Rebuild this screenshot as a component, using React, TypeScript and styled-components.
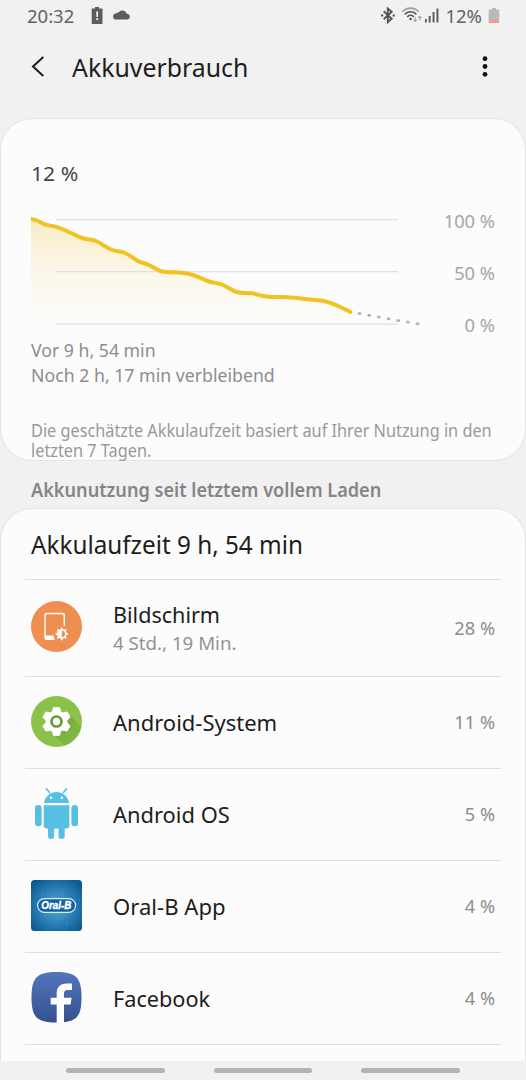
import React from "react";
import styled, { createGlobalStyle } from "styled-components";

const GlobalStyle = createGlobalStyle`
  html, body, #root { margin: 0; height: 100%; }
  body { background: #f1f1f1; overflow: hidden; }
  *, *::before, *::after { box-sizing: border-box; }
  svg { display: block; flex: none; }
`;

const Screen = styled.div`
  width: 526px;
  height: 1080px;
  display: flex;
  flex-direction: column;
  overflow: hidden;
  background: #f1f1f1;
  color: #1d1d1d;
  font-family: "Noto Sans", "Open Sans", sans-serif;
`;

const Label = styled.span<{
  $size: number;
  $line: number;
  $color?: string;
  $weight?: number;
  $stretch?: number;
  $right?: boolean;
}>`
  display: block;
  white-space: nowrap;
  font-size: ${(p) => p.$size}px;
  line-height: ${(p) => p.$line}px;
  color: ${(p) => p.$color ?? "#1d1d1d"};
  font-weight: ${(p) => p.$weight ?? 400};
  transform: scaleX(${(p) => p.$stretch ?? 1});
  transform-origin: ${(p) => (p.$right ? "right" : "left")} center;
`;

const StatusBar = styled.div`
  height: 32px;
  flex: none;
  display: flex;
  justify-content: space-between;
  padding: 0 26px 0 27px;
`;

const StatusGroup = styled.div`
  display: flex;
  align-items: flex-start;
`;

const Notifications = styled.div`
  display: flex;
  gap: 9px;
  margin-left: 17px;
`;

const Connectivity = styled.div`
  display: flex;
  margin-right: 5px;

  svg:first-child { margin-right: 6px; }
  svg:last-child { margin-left: 1px; }
`;

const BatteryGroup = styled.div`
  display: flex;
  gap: 6px;
`;

const Header = styled.header`
  height: 86px;
  flex: none;
  display: flex;
  align-items: flex-start;
  padding: 15px 31px 0 28px;
`;

const Title = styled.h1`
  margin: 0 auto 0 24px;
`;

const Card = styled.section<{ $open?: boolean }>`
  flex: none;
  background: #fcfcfc;
  border: 1px solid #e4e4e4;
  border-bottom-width: ${(p) => (p.$open ? 0 : 1)}px;
  border-radius: ${(p) => (p.$open ? "32px 32px 0 0" : "32px")};
`;

const UsageCard = styled(Card)`
  height: 343px;
  padding: 39px 30px 0;
`;

const ChartRow = styled.div`
  display: flex;
  justify-content: space-between;
  height: 125px;
  margin-top: 24px;
`;

const Scale = styled.div`
  display: flex;
  flex-direction: column;
  align-items: flex-end;
  gap: 26px;
  margin-top: -4px;
`;

const Note = styled.div`
  margin-top: 34px;
`;

const SectionTitle = styled.h2`
  margin: 0;
  height: 47px;
  flex: none;
  padding: 15px 31px 0;
`;

const ListCard = styled(Card)`
  height: 553px;
  padding: 0 24px;
  overflow: hidden;
`;

const ListHead = styled.div`
  height: 70px;
  padding: 19px 6px 0;
`;

const Row = styled.div<{ $height: number; $double?: boolean }>`
  display: flex;
  align-items: center;
  height: ${(p) => p.$height}px;
  padding: 0 6px ${(p) => (p.$double ? 0 : 2)}px 6px;
  border-top: 1px solid #dedede;

  > svg { margin-bottom: ${(p) => (p.$double ? 4 : 0)}px; }
`;

const RowText = styled.div`
  flex: 1;
  margin-left: 31px;
`;

const NavBar = styled.nav`
  flex: 1;
  display: flex;
  justify-content: center;
  gap: 49px;
  padding-top: 7px;
`;

const NavPill = styled.span`
  width: 98.5px;
  height: 5px;
  border-radius: 2.5px;
  background: #b3b3b3;
`;

const points: [number, number][] = [
  [0, 7], [6, 8.5], [15, 12.7], [27, 15.3], [39, 20.5], [51, 26], [65, 29],
  [80, 37.5], [94, 41], [107, 49], [118, 53], [131, 59.5], [149, 60.5],
  [162, 63], [178, 69.5], [191, 72.5], [206, 80], [221, 81.3], [232, 84],
  [241, 85], [257, 85.2], [279, 87.5], [294, 89.3], [307, 94], [319.5, 100],
];

const smooth = (p: [number, number][]) => {
  let d = `M${p[0][0]} ${p[0][1]}`;
  for (let i = 0; i < p.length - 1; i++) {
    const a = p[i - 1] ?? p[i];
    const b = p[i];
    const c = p[i + 1];
    const e = p[i + 2] ?? c;
    d += `C${b[0] + (c[0] - a[0]) / 6} ${b[1] + (c[1] - a[1]) / 6} ${c[0] - (e[0] - b[0]) / 6} ${c[1] - (e[1] - b[1]) / 6} ${c[0]} ${c[1]}`;
  }
  return d;
};

const Chart = () => {
  const line = smooth(points);
  return (
    <svg width="392" height="120" viewBox="0 0 392 120">
      <defs>
        <linearGradient id="fade" x1="0" y1="7" x2="0" y2="112" gradientUnits="userSpaceOnUse">
          <stop offset="0" stopColor="#f9ebc2" />
          <stop offset="1" stopColor="#fcf8ea" stopOpacity="0.1" />
        </linearGradient>
        <clipPath id="plot">
          <rect x="0" y="0" width="392" height="120" />
        </clipPath>
      </defs>
      <path d={`${line}V112H0Z`} fill="url(#fade)" />
      <path d="M25 7.6H367M25 59.6H367M25 112.1H367" stroke="#dcdcdc" strokeOpacity="0.85" strokeWidth="1.3" />
      <path d={line} clipPath="url(#plot)" fill="none" stroke="#f0c320" strokeWidth="4" strokeLinecap="round" strokeLinejoin="round" />
      {Array.from({ length: 7 }, (_, i) => (
        <ellipse key={i} cx={328.5 + i * 9.67} cy={101.5 + i * 1.72} rx="2" ry="1.5" fill="#b1b7b9" />
      ))}
    </svg>
  );
};

const LowBattery = () => (
  <svg width="13" height="26" viewBox="0 0 13 26">
    <path d="M4 7h4v1.5h3.5V24H.7V8.500H4Z" fill="#5d5d5d" />
    <path d="M5.200 11.500h1.900l-.2 5.500H5.400ZM5.200 18.300h1.900V20H5.200Z" fill="#f1f1f1" />
  </svg>
);

const Cloud = () => (
  <svg width="18" height="26" viewBox="0 0 18 26">
    <path d="M3.300 19.600a3 3 0 0 1-.3-6 2.600 2.600 0 0 1 2.500-1.200A4.700 4.700 0 0 1 13.700 13.800a2.900 2.900 0 1 1 .3 5.800Z" fill="#5d5d5d" />
  </svg>
);

const Bluetooth = () => (
  <svg width="16" height="26" viewBox="0 0 16 26" fill="none" stroke="#555" strokeWidth="1.900">
    <path d="m3.700 11.300 8 7.500-3.900 3.300V8.600l3.900 3.200-8 7.500" />
    <path d="M1 15.400h2.200M12.600 15.400h2.200" strokeWidth="2" />
  </svg>
);

const Wifi = () => (
  <svg width="21" height="26" viewBox="0 0 21 26" fill="none" strokeLinecap="round">
    <path d="M.9 11.300a11 11 0 0 1 15.400 0" stroke="#a2a2a2" strokeWidth="1.600" />
    <path d="M3.300 13.900a7.700 7.700 0 0 1 10.600 0M5.700 16.500a4.200 4.200 0 0 1 5.800 0" stroke="#555" strokeWidth="1.600" />
    <circle cx="8.600" cy="19" r="1.300" fill="#555" />
    <path d="M13.200 17.500v4m-1.300-1.400 1.300 1.400 1.300-1.400M17.900 20.300v-4m-1.300 1.400 1.300-1.400 1.300 1.400" stroke="#a2a2a2" strokeWidth="1.100" />
  </svg>
);

const Signal = () => (
  <svg width="16" height="26" viewBox="0 0 16 26">
    <path d="M1 19h1.800v3.500H1ZM4.700 16h1.900v6.500H4.700ZM8.600 12h1.900v10.500H8.600ZM12.500 8.500h1.900v14h-1.900Z" fill="#5a5a5a" />
  </svg>
);

const BatteryLevel = () => (
  <svg width="12" height="26" viewBox="0 0 12 26">
    <path d="M4 8h4v1.500h2.200a1 1 0 0 1 1 1V20H.7v-9.500a1 1 0 0 1 1-1H4Z" fill="#b9b9b9" />
    <path d="M.7 19.700h10.500V22a1 1 0 0 1-1 1H1.700a1 1 0 0 1-1-1Z" fill="#ee9f87" />
  </svg>
);

const ScreenIcon = () => (
  <svg width="51" height="51" viewBox="0 0 51 51">
    <circle cx="25.500" cy="25.500" r="25.500" fill="#ef8e51" />
    <path d="M23 38.200H16a2 2 0 0 1-2-2V14.400a2 2 0 0 1 2-2h15.300a2 2 0 0 1 2 2v10.500" fill="none" stroke="#fff" strokeWidth="1.500" />
    <path d="M14 34.500h8.500l1.200 4.400H15.500a2 2 0 0 1-1.500-2Z" fill="#fff" />
    <g transform="translate(30.800 32.900)">
      {Array.from({ length: 8 }, (_, i) => (
        <path key={i} d="M-1.500-4.300 0-7l1.500 2.700Z" fill="#fff" transform={`rotate(${i * 45})`} />
      ))}
      <circle r="4.700" fill="#fff" />
      <path d="M0-3.200a3.200 3.200 0 0 1 0 6.400Z" fill="#ef8e51" />
    </g>
  </svg>
);

const GearIcon = () => (
  <svg width="51" height="51" viewBox="0 0 51 51">
    <defs>
      <clipPath id="disc">
        <circle cx="25.500" cy="25.500" r="25.500" />
      </clipPath>
      <linearGradient id="shade" x1="27" y1="27" x2="43" y2="43" gradientUnits="userSpaceOnUse">
        <stop offset="0" stopColor="#74a83d" />
        <stop offset="1" stopColor="#82ba45" />
      </linearGradient>
    </defs>
    <circle cx="25.500" cy="25.500" r="25.500" fill="#8bc34a" />
    <path clipPath="url(#disc)" d="M38.500 19 60 40.500V60H44L22.500 38.500Z" fill="url(#shade)" />
    <g transform="translate(25.500 25.500)">
      {Array.from({ length: 6 }, (_, i) => (
        <path key={i} d="M-4.500-9-3-14H3L4.500-9Z" fill="#fff" stroke="#fff" strokeWidth=".8" strokeLinejoin="round" transform={`rotate(${i * 60})`} />
      ))}
      <circle r="10.800" fill="#fff" />
      <circle r="5" fill="none" stroke="#679b39" strokeWidth="2.700" />
    </g>
  </svg>
);

const AndroidIcon = () => (
  <svg width="51" height="51" viewBox="0 0 51 51" fill="#56bfe4">
    <path d="M13 15a12.600 12.600 0 0 1 25 0Z" />
    <path d="m18.500 4.500-3-3.800M32.500 4.500l3-3.800" stroke="#56bfe4" strokeWidth="1.600" strokeLinecap="round" />
    <circle cx="20" cy="9.700" r="1.200" fill="#fff" />
    <circle cx="30.800" cy="9.700" r="1.200" fill="#fff" />
    <path d="M12.800 17.300h25.500v20.200a3 3 0 0 1-3 3H15.800a3 3 0 0 1-3-3Z" />
    <rect x="4" y="17" width="6.600" height="21.300" rx="3.300" />
    <rect x="40.400" y="17" width="6.600" height="21.300" rx="3.300" />
    <rect x="17" y="35" width="6.200" height="16" rx="3" />
    <rect x="27.500" y="35" width="6.200" height="16" rx="3" />
  </svg>
);

const OralIcon = () => (
  <svg width="51" height="51" viewBox="0 0 51 51">
    <defs>
      <radialGradient id="glow" cx=".5" cy=".52" r=".68">
        <stop offset="0" stopColor="#5aaad8" />
        <stop offset=".5" stopColor="#2a7fb6" />
        <stop offset="1" stopColor="#09548c" />
      </radialGradient>
    </defs>
    <rect width="51" height="51" rx="3.500" fill="url(#glow)" />
    <g fill="#8cc7ea" fillOpacity=".65">
      <circle cx="17" cy="9" r=".5" />
      <circle cx="31" cy="12" r=".6" />
      <circle cx="38" cy="9" r=".4" />
      <circle cx="11" cy="14" r=".5" />
      <circle cx="48.300" cy="20" r=".6" />
      <circle cx="36" cy="43" r=".7" />
      <circle cx="27" cy="39" r=".5" />
      <circle cx="14" cy="36" r=".5" />
    </g>
    <rect x="6.600" y="18.700" width="38" height="13.600" rx="6.800" fill="#1262a2" stroke="#d9ecf7" strokeWidth="1.200" />
    <text x="25.300" y="29" textAnchor="middle" textLength="30" lengthAdjust="spacingAndGlyphs" fontFamily="Liberation Sans, sans-serif" fontSize="10.500" fontWeight="700" fontStyle="italic" fill="#fff" stroke="#fff" strokeWidth=".4">
      Oral-B
    </text>
  </svg>
);

const FacebookIcon = () => (
  <svg width="51" height="51" viewBox="0 0 51 51">
    <defs>
      <linearGradient id="fb" x1="0" y1="0" x2="0" y2="1">
        <stop offset="0" stopColor="#5375bd" />
        <stop offset="1" stopColor="#35528f" />
      </linearGradient>
    </defs>
    <path d="M25.500 0C45 0 50.500 5.500 50.500 25.500S45 50.500 25.500 50.500.5 45.500.5 25.500 6 0 25.500 0Z" fill="url(#fb)" />
    <path d="M25.700 51V32.500h-6V25.700h6V21.400c0-6.300 3.700-10 9.700-10H41v6.500h-4.300c-2.600 0-3.700 1.200-3.700 3.700v4.100h7.600l-1 6.800H33V51Z" fill="#fff" />
  </svg>
);

const apps = [
  { name: "Bildschirm", detail: "4 Std., 19 Min.", share: "28 %", height: 97, stretch: 0.98, Icon: ScreenIcon },
  { name: "Android-System", share: "11 %", height: 92, stretch: 1, Icon: GearIcon },
  { name: "Android OS", share: "5 %", height: 92, stretch: 0.995, Icon: AndroidIcon },
  { name: "Oral-B App", share: "4 %", height: 92, stretch: 1.005, Icon: OralIcon },
  { name: "Facebook", share: "4 %", height: 92, stretch: 0.985, Icon: FacebookIcon },
];

const App = () => (
  <Screen>
    <GlobalStyle />
    <StatusBar>
      <StatusGroup>
        <Label $size={18.5} $line={32} $color="#626262">20:32</Label>
        <Notifications>
          <LowBattery />
          <Cloud />
        </Notifications>
      </StatusGroup>
      <StatusGroup>
        <Connectivity>
          <Bluetooth />
          <Wifi />
          <Signal />
        </Connectivity>
        <BatteryGroup>
          <Label $size={18.5} $line={32} $color="#626262">12%</Label>
          <BatteryLevel />
        </BatteryGroup>
      </StatusGroup>
    </StatusBar>
    <Header>
      <svg width="20" height="40" viewBox="0 0 20 40" fill="none" stroke="#1d1d1d" strokeWidth="2">
        <path d="M15.300 10 5 19.500 15.300 29" />
      </svg>
      <Title>
        <Label $size={26.3} $line={41} $stretch={0.945}>Akkuverbrauch</Label>
      </Title>
      <svg width="20" height="40" viewBox="0 0 20 40" fill="#111">
        <circle cx="10" cy="11.700" r="2.400" />
        <circle cx="10" cy="19.500" r="2.400" />
        <circle cx="10" cy="27.300" r="2.400" />
      </svg>
    </Header>

    <UsageCard>
      <Label $size={20.5} $line={30} $color="#444" $stretch={1.03}>12 %</Label>
      <ChartRow>
        <Chart />
        <Scale>
          <Label $size={18.3} $line={26} $color="#a5a5a5" $right>100 %</Label>
          <Label $size={18.3} $line={26} $color="#a5a5a5" $right>50 %</Label>
          <Label $size={18.3} $line={26} $color="#a5a5a5" $right>0 %</Label>
        </Scale>
      </ChartRow>
      <Label $size={18.5} $line={25} $color="#8d8d8d" $stretch={0.955}>Vor 9 h, 54 min</Label>
      <Label $size={18.5} $line={25} $color="#8d8d8d" $stretch={0.957}>Noch 2 h, 17 min verbleibend</Label>
      <Note>
        <Label $size={17.3} $line={20} $color="#999" $stretch={0.942}>Die geschätzte Akkulaufzeit basiert auf Ihrer Nutzung in den</Label>
        <Label $size={17.3} $line={20} $color="#999" $stretch={0.942}>letzten 7 Tagen.</Label>
      </Note>
    </UsageCard>

    <SectionTitle>
      <Label $size={19} $line={28} $color="#858585" $weight={600} $stretch={0.954}>Akkunutzung seit letztem vollem Laden</Label>
    </SectionTitle>

    <ListCard $open>
      <ListHead>
        <Label $size={24.5} $line={34} $stretch={0.99}>Akkulaufzeit 9 h, 54 min</Label>
      </ListHead>
      {apps.map(({ name, detail, share, height, stretch, Icon }) => (
        <Row key={name} $height={height} $double={Boolean(detail)}>
          <Icon />
          <RowText>
            <Label $size={22} $line={28} $stretch={stretch}>{name}</Label>
            {detail && <Label $size={18.5} $line={29} $color="#929292" $stretch={1.01}>{detail}</Label>}
          </RowText>
          <Label $size={18.2} $line={28} $color="#8d8d8d" $right>{share}</Label>
        </Row>
      ))}
      <Row $height={17} />
    </ListCard>

    <NavBar>
      <NavPill />
      <NavPill />
      <NavPill />
    </NavBar>
  </Screen>
);

export default App;
